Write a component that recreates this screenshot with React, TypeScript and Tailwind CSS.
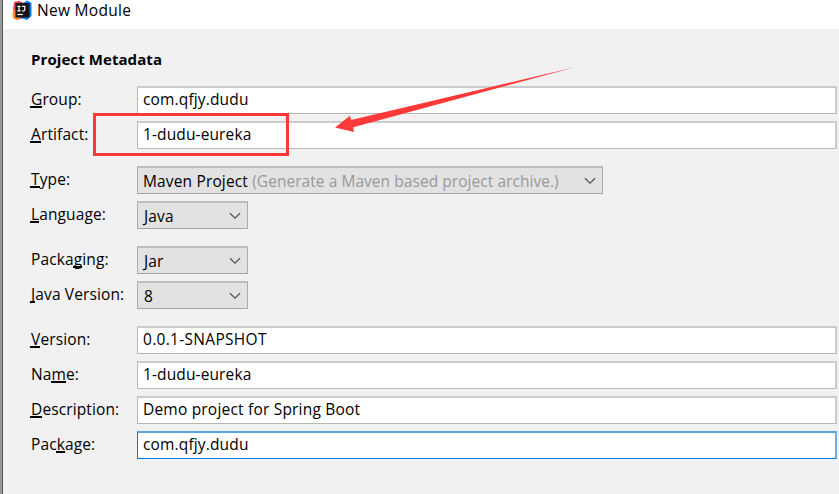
import type { ReactNode } from "react";

const U = ({ children }: { children: ReactNode }) => (
  <span className="relative inline-block">
    {children}
    <span className="absolute -left-px right-0 top-[19px] h-[2px] bg-black" />
  </span>
);

const Label = ({ children }: { children: ReactNode }) => (
  <label className="block h-[24px] w-[106px] shrink-0 whitespace-nowrap pt-px leading-[24px] tracking-[0.12px]">
    {children}
  </label>
);

const Field = ({ value, spacing, active = false }: { value: string; spacing: string; active?: boolean }) => (
  <div
    className={`flex h-[28px] w-[700px] items-start border-b border-l border-r-2 border-t-2 bg-white pl-[5px] ${
      active
        ? "border-b-[#0078d7] border-l-[#0078d7] border-r-[#66b0e8] border-t-[#55a6e4]"
        : "border-b-[#b8b8b8] border-l-[#b8b8b8] border-r-[#cbcbcb] border-t-[#cbcbcb]"
    }`}
  >
    <span className={`-mt-px whitespace-pre leading-[24px] ${spacing}`}>{value}</span>
  </div>
);

const Select = ({ children, wide = false }: { children: ReactNode; wide?: boolean }) => (
  <div
    className={`flex h-[28px] items-center justify-between border-b border-l border-r border-t-2 border-b-[#a5a5a5] border-l-[#adadad] border-r-[#adadad] border-t-[#bdbdbd] bg-[#e2e2e2] pr-[6px] ${
      wide ? "w-[466px] pl-[5px]" : "w-[111px] pl-[6px]"
    }`}
  >
    <span className="whitespace-pre leading-[24px] tracking-[0.15px]">{children}</span>
    <svg width="12" height="8" viewBox="0 0 12 8" fill="none" stroke="#555" strokeWidth="1.3">
      <path d="M1 1.2 6 6.2l5-5" />
    </svg>
  </div>
);

const Row = ({ children }: { children: ReactNode }) => <div className="flex h-[28px] items-start">{children}</div>;

const Logo = () => (
  <svg width="21" height="21" viewBox="0 0 21 21" className="shrink-0">
    <path d="M2 2 7 .8 12 3v15l-8 2-1-6-2-4Z" fill="#f5455f" />
    <path d="M.5 13 3 9l3 8 4 1-6 1.7-3-1.8Z" fill="#fc8a2c" />
    <path d="m11 3 4-2.5L19.5 3v13L15 20l-6-2Z" fill="#0a7cf5" />
    <rect x="3.5" y="3" width="14" height="14.5" fill="#151515" />
    <path d="M5.3 6.3h3.4M7 6.3v4.4M5.3 10.8h3.4M10 6.3h2.8v3.2q0 1.3-1.3 1.3h-1.4" fill="none" stroke="#fff" strokeWidth="1.2" />
    <path d="M5.2 14.5h5.6" stroke="#fff" strokeWidth="1.2" />
  </svg>
);

export default function App() {
  return (
    <div className="relative flex h-[494px] w-[839px] overflow-hidden bg-[#f1f1f1] font-['Open_Sans','Noto_Sans',sans-serif] text-[15.5px] text-black">
      <div className="w-[3px] shrink-0 border-r border-[#555] bg-[#999]" />
      <div className="flex min-w-0 flex-1 flex-col">
        <header className="flex h-[29px] shrink-0 items-start bg-white pl-[9px]">
          <Logo />
          <h1 className="-mt-[2px] ml-[4px] whitespace-nowrap leading-[24px] tracking-[0.3px]">New Module</h1>
        </header>
        <main className="pl-[28px]">
          <h2 className="mt-[18px] h-[24px] whitespace-nowrap text-[15px] font-bold leading-[24px] tracking-[0.08px]">Project Metadata</h2>
          <div className="mt-[15px] flex flex-col gap-[17px]">
            <section className="flex flex-col gap-[7px]">
              <Row><Label><U>G</U>roup:</Label><Field value="com.qfjy.dudu" spacing="tracking-[0.15px]" /></Row>
              <Row><Label><U>A</U>rtifact:</Label><Field value="1-dudu-eureka" spacing="tracking-[0.12px]" /></Row>
            </section>
            <section className="flex flex-col gap-[7px]">
              <Row>
                <Label><U>T</U>ype:</Label>
                <Select wide>
                  <span>Maven Project </span>
                  <span className="tracking-[0.05px] text-[#999]">(Generate a Maven based project archive.)</span>
                </Select>
              </Row>
              <Row><Label><U>L</U>anguage:</Label><Select>Java</Select></Row>
            </section>
            <section className="flex flex-col gap-[7px]">
              <Row><Label>Packa<U>g</U>ing:</Label><Select>Jar</Select></Row>
              <Row><Label><U>J</U>ava Version:</Label><Select>8</Select></Row>
            </section>
            <section className="flex flex-col gap-[7px]">
              <Row><Label><U>V</U>ersion:</Label><Field value="0.0.1-SNAPSHOT" spacing="tracking-[0.3px]" /></Row>
              <Row><Label>Na<U>m</U>e:</Label><Field value="1-dudu-eureka" spacing="tracking-[0.12px]" /></Row>
              <Row><Label><U>D</U>escription:</Label><Field value="Demo project for Spring Boot" spacing="tracking-[0.2px]" /></Row>
              <Row><Label>Pac<U>k</U>age:</Label><Field value="com.qfjy.dudu" spacing="tracking-[0.15px]" active /></Row>
            </section>
          </div>
        </main>
      </div>
      <div className="pointer-events-none absolute left-[93px] top-[113px] h-[43px] w-[196px] border-[3px] border-[#fb3838]" />
      <svg className="pointer-events-none absolute left-[320px] top-[55px]" width="270" height="90" viewBox="0 0 270 90">
        <path d="M15 72.5 30 60.7 31 65 255 12.2 33.2 72.3 34 77Z" fill="#fd3939" />
      </svg>
    </div>
  );
}
